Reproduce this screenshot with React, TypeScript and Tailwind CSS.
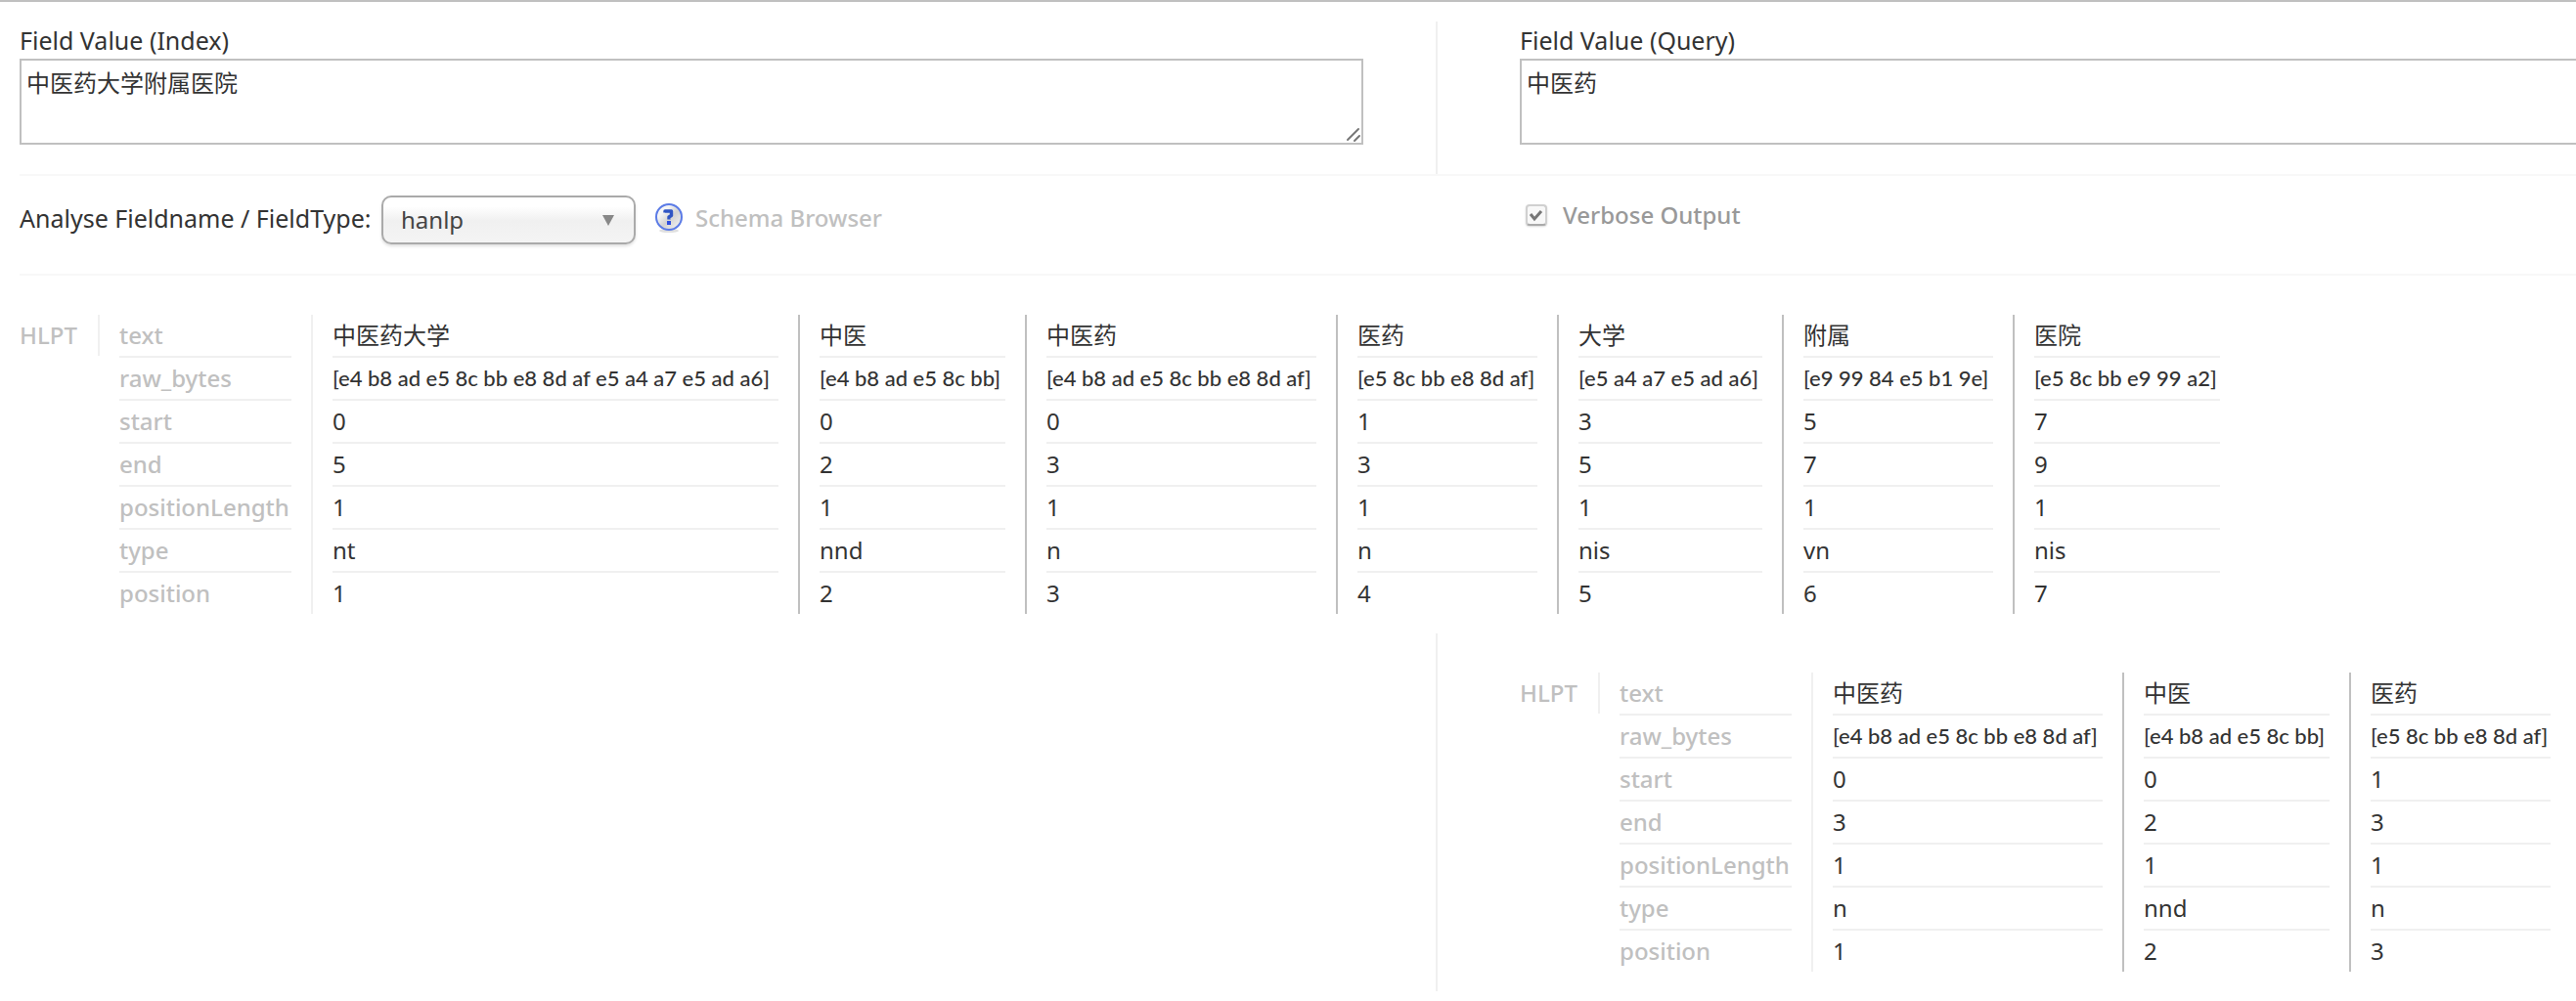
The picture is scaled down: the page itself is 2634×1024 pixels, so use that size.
import React, { useId, useState } from 'react';

interface Token {
  text: string;
  raw_bytes: string;
  start: number;
  end: number;
  positionLength: number;
  type: string;
  position: number;
}

const ATTRIBUTES: (keyof Token)[] = ['text', 'raw_bytes', 'start', 'end', 'positionLength', 'type', 'position'];

const indexTokens: Token[] = [
  { text: '中医药大学', raw_bytes: '[e4 b8 ad e5 8c bb e8 8d af e5 a4 a7 e5 ad a6]', start: 0, end: 5, positionLength: 1, type: 'nt', position: 1 },
  { text: '中医', raw_bytes: '[e4 b8 ad e5 8c bb]', start: 0, end: 2, positionLength: 1, type: 'nnd', position: 2 },
  { text: '中医药', raw_bytes: '[e4 b8 ad e5 8c bb e8 8d af]', start: 0, end: 3, positionLength: 1, type: 'n', position: 3 },
  { text: '医药', raw_bytes: '[e5 8c bb e8 8d af]', start: 1, end: 3, positionLength: 1, type: 'n', position: 4 },
  { text: '大学', raw_bytes: '[e5 a4 a7 e5 ad a6]', start: 3, end: 5, positionLength: 1, type: 'nis', position: 5 },
  { text: '附属', raw_bytes: '[e9 99 84 e5 b1 9e]', start: 5, end: 7, positionLength: 1, type: 'vn', position: 6 },
  { text: '医院', raw_bytes: '[e5 8c bb e9 99 a2]', start: 7, end: 9, positionLength: 1, type: 'nis', position: 7 },
];

const queryTokens: Token[] = [
  { text: '中医药', raw_bytes: '[e4 b8 ad e5 8c bb e8 8d af]', start: 0, end: 3, positionLength: 1, type: 'n', position: 1 },
  { text: '中医', raw_bytes: '[e4 b8 ad e5 8c bb]', start: 0, end: 2, positionLength: 1, type: 'nnd', position: 2 },
  { text: '医药', raw_bytes: '[e5 8c bb e8 8d af]', start: 1, end: 3, positionLength: 1, type: 'n', position: 3 },
];

// Minimum column width for each term
const COLUMN_WIDTH: Record<string, string> = {
  中医药大学: 'min-w-[456px]',
  中医药: 'min-w-[276px]',
  中医: 'min-w-[190px]',
  医药: 'min-w-[184px]',
  大学: 'min-w-[188px]',
  附属: 'min-w-[194px]',
  医院: 'min-w-[190px]',
};

const HelpIcon: React.FC = () => (
  <svg width="30" height="30" viewBox="0 0 30 30" aria-hidden="true" className="shrink-0">
    <defs>
      <linearGradient id="help-fill" x1="0" y1="0" x2="1" y2="1">
        <stop offset="0" stopColor="#ffffff" />
        <stop offset="0.3" stopColor="#f4f4f4" />
        <stop offset="0.55" stopColor="#d2d2d2" />
        <stop offset="1" stopColor="#fafafa" />
      </linearGradient>
    </defs>
    <ellipse cx="15" cy="28" rx="10" ry="2" fill="#e0e0e0" />
    <circle cx="15" cy="14" r="13" fill="url(#help-fill)" stroke="#5b7be6" strokeWidth="2" />
    <path d="M11 9.5V8h6.5v4.5L15 14v2.5" fill="none" stroke="#2f55c4" strokeWidth="3.4" strokeLinejoin="round" />
    <rect x="13" y="18" width="4" height="4" fill="#2f4fe0" />
  </svg>
);

interface AnalysisTableProps {
  tokenizer: string;
  tokens: Token[];
}

const AnalysisTable: React.FC<AnalysisTableProps> = ({ tokenizer, tokens }) => (
  <table className="border-collapse text-left whitespace-nowrap">
    <tbody>
      {ATTRIBUTES.map((attribute, row) => {
        const line = row < ATTRIBUTES.length - 1 ? 'h-11 border-b-2 border-[#f0f0f0]' : 'h-[42px]';

        return (
          <tr key={attribute}>
            {row === 0 ? (
              <th scope="row" className="p-0 align-top font-medium text-[#c0c0c0]">
                <div className="h-[42px] w-[82px] border-r-2 border-[#f0f0f0] leading-[42px]">
                  <abbr title={tokenizer} className="no-underline">{tokenizer}</abbr>
                </div>
              </th>
            ) : (
              <td className="p-0" />
            )}
            <th scope="row" className="px-5 py-0 font-medium text-[#c0c0c0]">
              <div className={`w-44 leading-[42px] ${line}`}>{attribute}</div>
            </th>
            {tokens.map((token, col) => (
              <td
                key={token.position}
                className={`border-l-2 px-5 py-0 ${col === 0 ? 'border-[#f0f0f0]' : 'border-[#c0c0c0]'}`}
              >
                <div
                  className={`leading-[42px] ${line} ${COLUMN_WIDTH[token.text]} ${
                    attribute === 'raw_bytes' ? 'font-[Lato,sans-serif] text-[22px] font-medium' : ''
                  }`}
                >
                  {token[attribute]}
                </div>
              </td>
            ))}
          </tr>
        );
      })}
    </tbody>
  </table>
);

export default function App() {
  const id = useId();
  const [indexValue, setIndexValue] = useState('中医药大学附属医院');
  const [queryValue, setQueryValue] = useState('中医药');
  const [fieldType, setFieldType] = useState('hanlp');
  const [verbose, setVerbose] = useState(true);

  return (
    <main className="min-h-screen overflow-hidden border-t-2 border-[#c0c0c0] bg-white pl-5 font-['Noto_Sans','Noto_Sans_CJK_SC',sans-serif] text-[24px] text-[#333]">
      <form onSubmit={(e) => e.preventDefault()}>
        {/* Field values */}
        <div className="grid grid-cols-[1450fr_1164fr] border-b-2 border-[#f8f8f8] pt-5">
          <div className="flex flex-col border-r-2 border-[#f0f0f0] pr-[74px] pb-[30px]">
            <label htmlFor={`${id}-index`} className="h-[38px] text-[25px] leading-[38px]">Field Value (Index)</label>
            <div className="relative">
              <textarea
                id={`${id}-index`}
                value={indexValue}
                onChange={(e) => setIndexValue(e.target.value)}
                className="block h-[88px] w-full resize-y border-2 border-[#c0c0c0] px-[5px] py-1 leading-[38px] outline-none"
              />
              <svg width="16" height="16" viewBox="0 0 16 16" aria-hidden="true" className="pointer-events-none absolute right-0.5 bottom-0.5">
                <path d="M0 0h16v16H0z" fill="#fff" />
                <path d="M2 13L13 2M9 14l5-5" fill="none" stroke="#777" strokeWidth="2" strokeLinecap="round" />
              </svg>
            </div>
          </div>
          <div className="flex flex-col pb-[30px] pl-[84px]">
            <label htmlFor={`${id}-query`} className="h-[38px] text-[25px] leading-[38px]">Field Value (Query)</label>
            <textarea
              id={`${id}-query`}
              value={queryValue}
              onChange={(e) => setQueryValue(e.target.value)}
              className="h-[88px] w-full resize-none border-2 border-r-0 border-[#c0c0c0] px-[5px] py-1 leading-[38px] outline-none"
            />
          </div>
        </div>

        {/* Field type and options */}
        <div className="grid grid-cols-[1450fr_1164fr] border-b-2 border-[#f8f8f8] pt-5 pb-[30px]">
          <div className="flex h-[50px] items-start">
            <label htmlFor={`${id}-type`} className="w-[370px] text-[25px] leading-[46px] whitespace-nowrap">
              Analyse Fieldname / FieldType:
            </label>
            <div className="relative">
              <select
                id={`${id}-type`}
                value={fieldType}
                onChange={(e) => setFieldType(e.target.value)}
                className="block h-[50px] w-[260px] appearance-none rounded-[10px] border-2 border-[#aaa] bg-linear-to-b from-white from-20% via-[#f0f0f0] via-52% to-[#f4f4f4] px-[18px] text-[#444] shadow-[0_2px_3px_rgba(0,0,0,0.12)] outline-none"
              >
                <option>hanlp</option>
              </select>
              <svg width="12" height="11" viewBox="0 0 12 11" aria-hidden="true" className="pointer-events-none absolute top-5 right-[22px]">
                <path d="M0 0h12L6 11z" fill="#888" />
              </svg>
            </div>
            <a href="#schema-browser" className="ml-[19px] flex h-[46px] items-center gap-3 font-medium text-[#c0c0c0]">
              <HelpIcon />
              Schema Browser
            </a>
          </div>
          <label className="flex h-10 items-center gap-4 pl-[90px] font-medium text-[#999]">
            <span className="relative size-[22px]">
              <input
                type="checkbox"
                checked={verbose}
                onChange={(e) => setVerbose(e.target.checked)}
                className="peer block size-[22px] appearance-none rounded-sm border-2 border-[#d0d0d0] border-b-[#aaa] bg-[#f8f8f8] shadow-[0_1px_2px_rgba(0,0,0,0.15)]"
              />
              <svg width="22" height="22" viewBox="0 0 22 22" aria-hidden="true" className="pointer-events-none absolute inset-0 hidden peer-checked:block">
                <path d="M5 10l4 5 7-8" fill="none" stroke="#777" strokeWidth="3" />
              </svg>
            </span>
            Verbose Output
          </label>
        </div>
      </form>

      {/* Index analysis */}
      <section className="pt-10 pb-5">
        <AnalysisTable tokenizer="HLPT" tokens={indexTokens} />
      </section>

      {/* Query analysis */}
      <section className="grid grid-cols-[1450fr_1164fr]">
        <div className="border-r-2 border-[#f0f0f0]" />
        <div className="min-w-0 pt-10 pb-5 pl-[84px]">
          <AnalysisTable tokenizer="HLPT" tokens={queryTokens} />
        </div>
      </section>
    </main>
  );
}
